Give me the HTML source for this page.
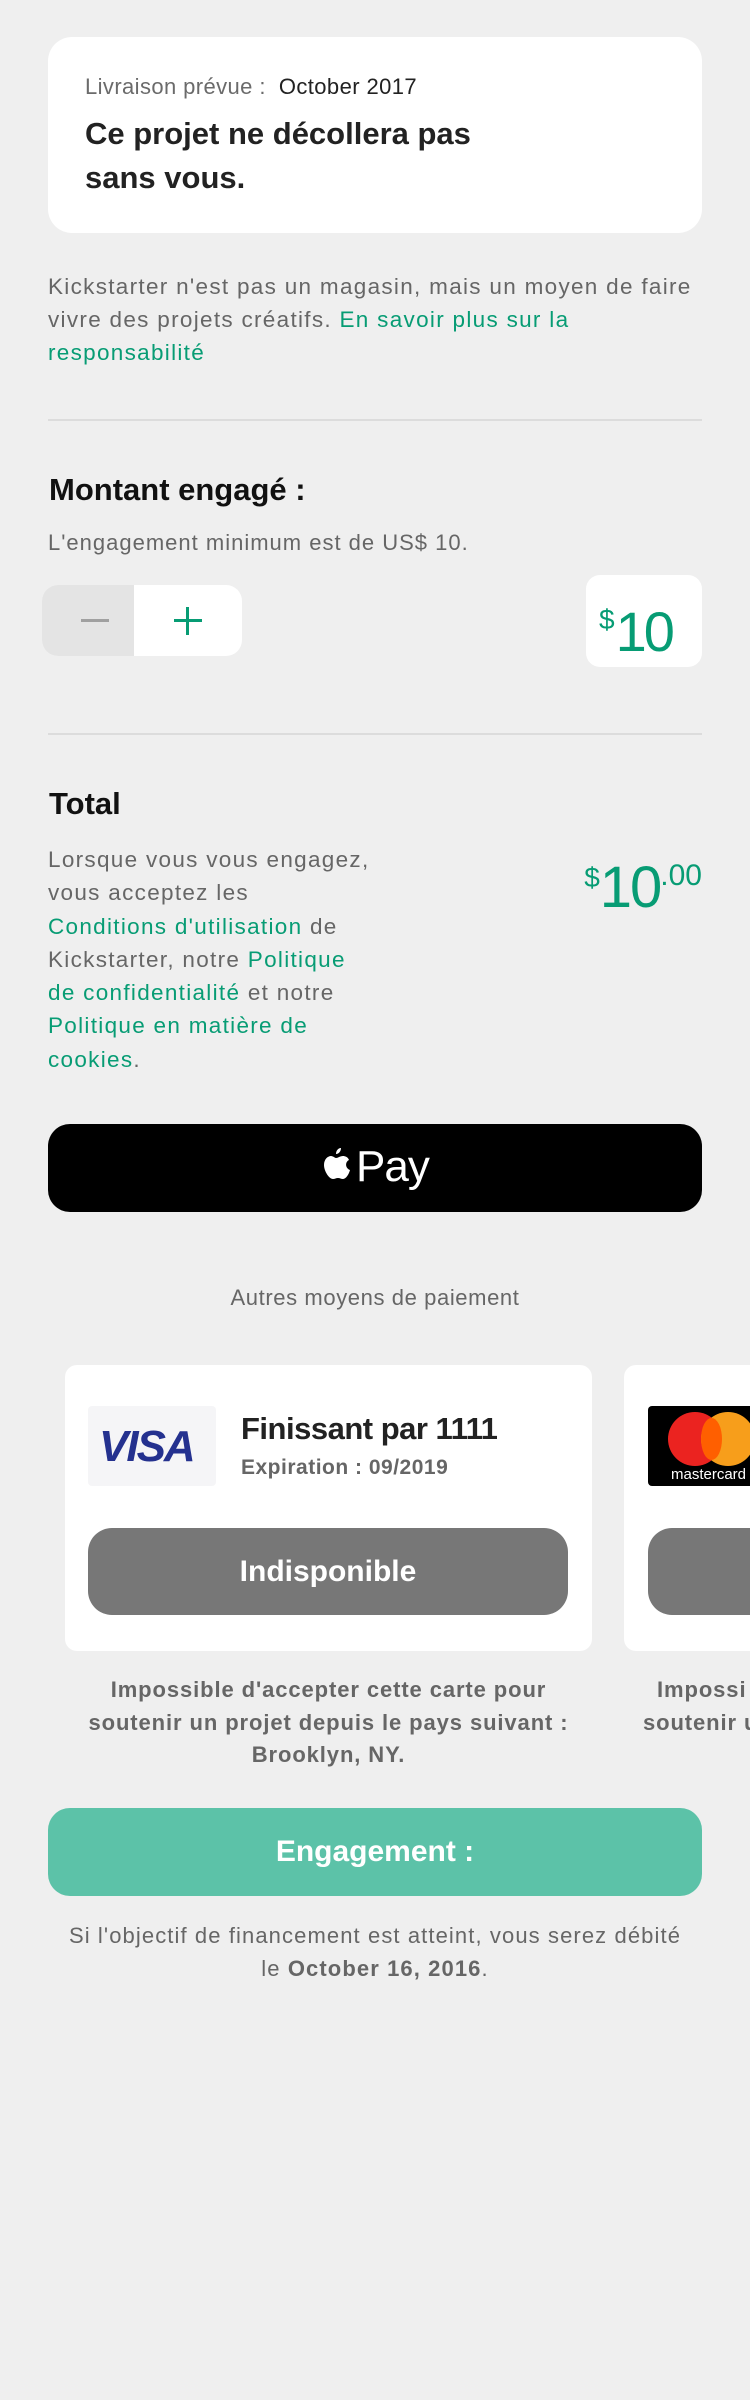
<!DOCTYPE html>
<html><head><meta charset="utf-8"><style>
*{margin:0;padding:0;box-sizing:border-box}
body{width:750px;height:2400px;background:#efefef;font-family:"Liberation Sans",sans-serif;position:relative;overflow:hidden;color:#666}
.a{position:absolute}
.g{color:#079c74}
.card{background:#fff;border-radius:24px}
.p{font-size:22.5px;letter-spacing:1.3px;white-space:nowrap}
</style></head><body>
<div class="a card" style="left:48px;top:37px;width:654px;height:196px"></div>
<div class="a" style="left:85px;top:73px;font-size:22px;line-height:28px;color:#6b6b6b;letter-spacing:0.4px">Livraison prévue :&nbsp; <span style="color:#222">October 2017</span></div>
<div class="a" style="left:85px;top:112px;font-size:31px;line-height:44px;font-weight:bold;color:#222">Ce projet ne décollera pas<br>sans vous.</div>
<div class="a p" style="left:48px;top:270px;line-height:33px;color:#666">Kickstarter n'est pas un magasin, mais un moyen de faire<br>vivre des projets créatifs. <span class="g">En savoir plus sur la<br>responsabilité</span></div>
<div class="a" style="left:48px;top:419px;width:654px;height:2px;background:#dcdcdc"></div>
<div class="a" style="left:49px;top:472px;font-size:31px;font-weight:bold;color:#111">Montant engagé :</div>
<div class="a p" style="left:48px;top:530px;color:#666;font-size:22px;letter-spacing:1px">L'engagement minimum est de US$ 10.</div>
<div class="a" style="left:42px;top:585px;width:200px;height:71px;border-radius:16px;background:#fff;overflow:hidden"><div style="width:92px;height:71px;background:#e4e4e4"></div></div>
<div class="a" style="left:81px;top:619px;width:28px;height:3px;background:#a0a0a0"></div>
<div class="a" style="left:174px;top:619px;width:28px;height:3px;background:#079c74"></div>
<div class="a" style="left:186px;top:607px;width:3px;height:28px;background:#079c74"></div>
<div class="a" style="left:586px;top:575px;width:116px;height:92px;border-radius:14px;background:#fff"></div>
<div class="a g" style="left:599px;top:590px;font-size:56px;line-height:60px;letter-spacing:-3px"><span style="font-size:28px;vertical-align:22px;letter-spacing:1px">$</span>10</div>
<div class="a" style="left:48px;top:733px;width:654px;height:2px;background:#dcdcdc"></div>
<div class="a" style="left:49px;top:786px;font-size:31px;font-weight:bold;color:#111">Total</div>
<div class="a p" style="left:48px;top:843px;line-height:33.3px;color:#666">Lorsque vous vous engagez,<br>vous acceptez les<br><span class="g">Conditions d'utilisation</span> de<br>Kickstarter, notre <span class="g">Politique<br>de confidentialité</span> et notre<br><span class="g">Politique en matière de<br>cookies</span>.</div>
<div class="a g" style="right:48px;top:846px;font-size:58px;line-height:60px;letter-spacing:-2px"><span style="font-size:28px;vertical-align:20px;letter-spacing:0">$</span>10<span style="font-size:30px;vertical-align:22px;letter-spacing:0">.00</span></div>
<div class="a" style="left:48px;top:1124px;width:654px;height:88px;border-radius:22px;background:#000"></div>
<svg class="a" style="left:320px;top:1146px" width="32" height="40" viewBox="0 0 32 40"><path fill="#fff" d="M21 2c0 3-2 6-5 6 0-3 2-6 5-6zM16 12c2 0 4-2 7-2 2 0 5 1 6 4-4 2-4 8 1 10-1 4-4 9-7 9-2 0-3-1-5-1s-3 1-5 1c-4 0-9-8-9-14 0-6 4-9 7-9 2 0 4 2 5 2z"/></svg>
<div class="a" style="left:356px;top:1140px;font-size:44px;line-height:54px;color:#fff;letter-spacing:-1px">Pay</div>
<div class="a p" style="left:0;width:750px;top:1285px;text-align:center;font-size:22px;color:#666;letter-spacing:0.6px">Autres moyens de paiement</div>
<div class="a card" style="left:65px;top:1365px;width:527px;height:286px;border-radius:12px"></div>
<div class="a" style="left:88px;top:1406px;width:128px;height:80px;background:#f5f5f7;border-radius:4px"></div>
<div class="a" style="left:99px;top:1422px;font-size:44px;font-weight:bold;font-style:italic;color:#24318f;letter-spacing:-2px">VISA</div>
<div class="a" style="left:241px;top:1411px;font-size:31px;color:#222;font-weight:bold;letter-spacing:-0.5px">Finissant par 1111</div>
<div class="a" style="left:241px;top:1456px;font-size:21px;font-weight:bold;color:#666;letter-spacing:0.5px">Expiration : 09/2019</div>
<div class="a" style="left:88px;top:1528px;width:480px;height:87px;border-radius:24px;background:#777;color:#fff;font-size:30px;line-height:87px;text-align:center;font-weight:bold">Indisponible</div>
<div class="a" style="left:65px;width:527px;top:1674px;text-align:center;font-size:22px;line-height:32.5px;font-weight:bold;color:#666;letter-spacing:0.9px;white-space:nowrap">Impossible d'accepter cette carte pour<br>soutenir un projet depuis le pays suivant :<br>Brooklyn, NY.</div>
<div class="a card" style="left:624px;top:1365px;width:200px;height:286px;border-radius:12px"></div>
<div class="a" style="left:648px;top:1406px;width:110px;height:80px;background:#000;border-radius:4px;overflow:hidden">
<div class="a" style="left:20px;top:6px;width:54px;height:54px;border-radius:50%;background:#eb2320"></div>
<div class="a" style="left:53px;top:6px;width:54px;height:54px;border-radius:50%;background:#f79e1b"></div>
<div class="a" style="left:53px;top:12px;width:21px;height:42px;border-radius:50%;background:#ff5f00"></div>
<div class="a" style="left:23px;top:60px;font-size:15px;color:#fff">mastercard</div></div>
<div class="a" style="left:648px;top:1528px;width:200px;height:87px;border-radius:24px;background:#777"></div>
<div class="a" style="left:643px;top:1674px;font-size:22px;line-height:32.5px;font-weight:bold;color:#666;white-space:nowrap;letter-spacing:0.9px">&nbsp;&nbsp;Impossi<br>soutenir u</div>
<div class="a" style="left:48px;top:1808px;width:654px;height:88px;border-radius:22px;background:#5cc2a8;color:#fff;font-size:30px;line-height:88px;text-align:center;font-weight:bold">Engagement :</div>
<div class="a p" style="left:0;width:750px;top:1919px;text-align:center;font-size:22px;line-height:33px;color:#666;letter-spacing:1.1px">Si l'objectif de financement est atteint, vous serez débité<br>le <b>October 16, 2016</b>.</div>
</body></html>
